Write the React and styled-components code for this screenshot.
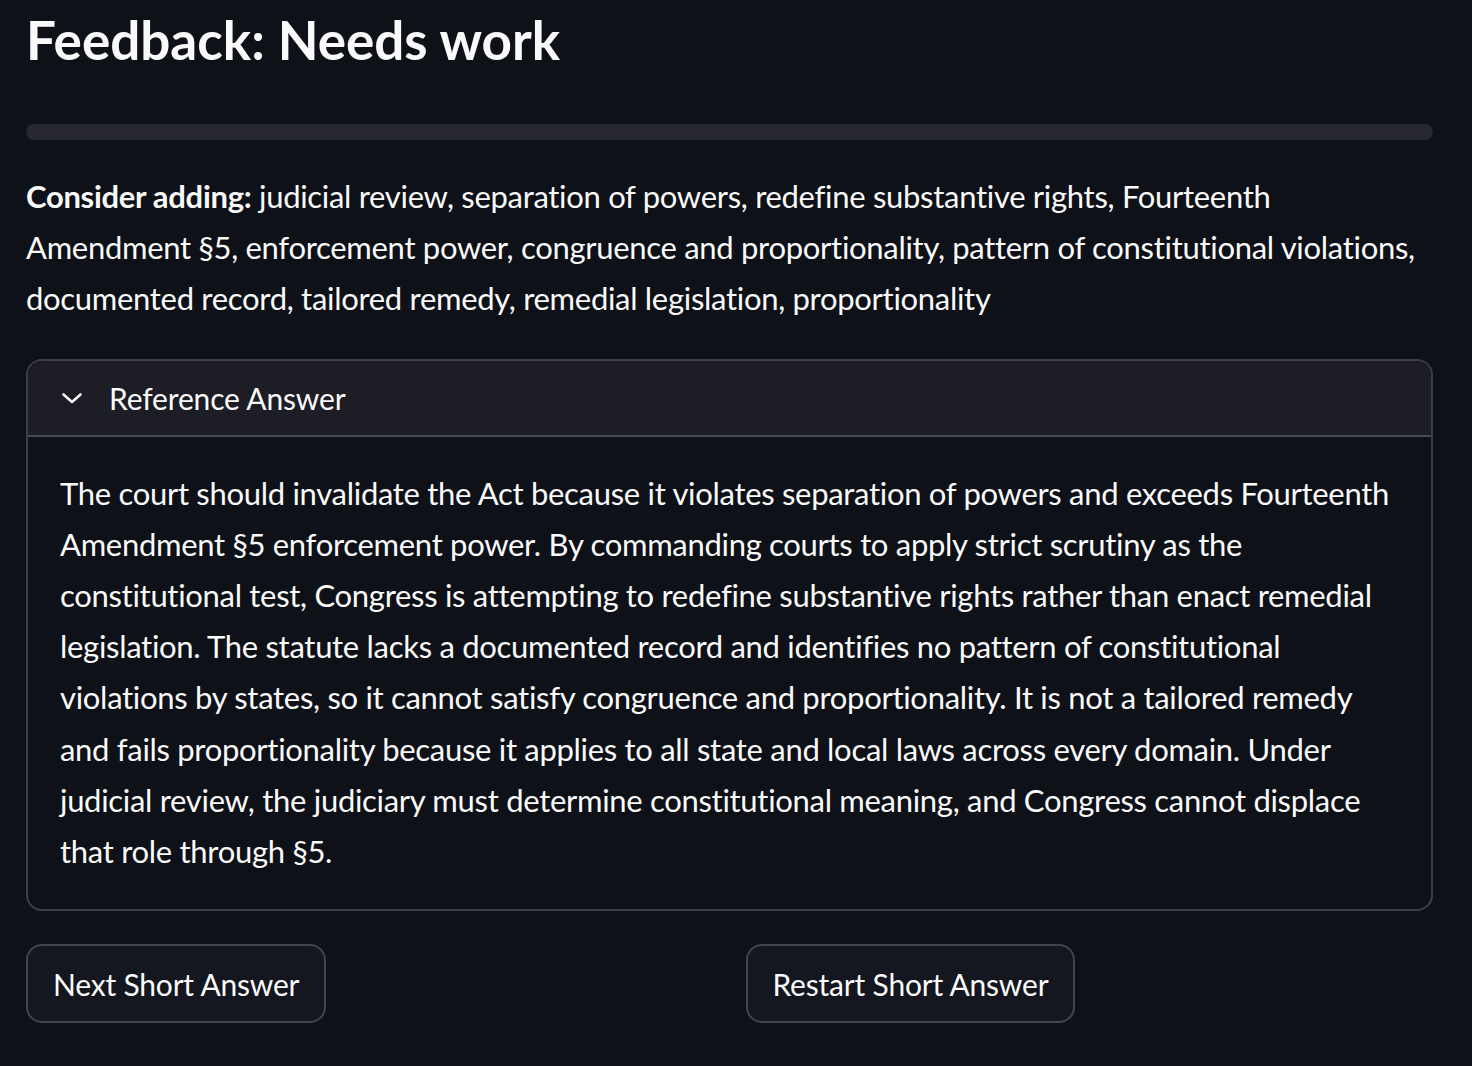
import styled, { createGlobalStyle } from "styled-components";

const GlobalStyle = createGlobalStyle`
  html, body {
    margin: 0;
    padding: 0;
    background: #0e1117;
  }
  body {
    font-family: Lato, "Noto Sans", sans-serif;
    color: #fafafa;
    letter-spacing: -0.3px;
  }
  * {
    box-sizing: border-box;
  }
`;

const Page = styled.div`
  width: 1472px;
  min-height: 1066px;
  padding: 6px 39px 0 26px;
  display: flex;
  flex-direction: column;
`;

const Title = styled.h2`
  margin: 0;
  font-size: 53px;
  font-weight: 700;
  line-height: 67px;
  letter-spacing: 0;
`;

const Track = styled.div`
  margin-top: 51px;
  height: 16px;
  border-radius: 8px;
  background: #262730;
`;

const Fill = styled.div`
  height: 100%;
  border-radius: 8px;
  background: #ff4b4b;
`;

const Hint = styled.p`
  margin: 31px 0 0;
  font-size: 31px;
  line-height: 51.2px;
  white-space: pre-line;
  b {
    font-weight: 700;
  }
`;

const Expander = styled.details`
  margin-top: 34px;
  border: 2px solid rgba(250, 250, 250, 0.2);
  border-radius: 16px;
  overflow: hidden;
`;

const Summary = styled.summary`
  list-style: none;
  display: flex;
  align-items: center;
  gap: 25px;
  height: 76px;
  padding: 0 32px;
  background: #1c1d25;
  border-bottom: 2px solid rgba(250, 250, 250, 0.2);
  font-size: 30px;
  letter-spacing: -0.15px;
  cursor: pointer;
  &::-webkit-details-marker {
    display: none;
  }
  svg {
    flex: none;
  }
`;

const Body = styled.div`
  padding: 31px 32px 32px;
  font-size: 31px;
  line-height: 51.2px;
  white-space: pre-line;
`;

const Actions = styled.div`
  margin-top: 33px;
  display: grid;
  grid-template-columns: 1fr 1fr;
  column-gap: 32px;
  justify-items: start;
`;

const Button = styled.button`
  height: 79px;
  padding: 0 25px;
  border: 2px solid rgba(250, 250, 250, 0.2);
  border-radius: 16px;
  background: #14171f;
  color: #fafafa;
  font-family: inherit;
  font-size: 30px;
  letter-spacing: -0.2px;
  cursor: pointer;
`;

const Chevron = () => (
  <svg width="24" height="24" viewBox="0 0 24 24" fill="none">
    <path
      d="M3.5 8.5 L12 16 L20.5 8.5"
      stroke="#fafafa"
      strokeWidth="2.6"
      strokeLinecap="round"
      strokeLinejoin="round"
    />
  </svg>
);

const hintLines = [
  " judicial review, separation of powers, redefine substantive rights, Fourteenth",
  "Amendment §5, enforcement power, congruence and proportionality, pattern of constitutional violations,",
  "documented record, tailored remedy, remedial legislation, proportionality",
];

const answerLines = [
  "The court should invalidate the Act because it violates separation of powers and exceeds Fourteenth",
  "Amendment §5 enforcement power. By commanding courts to apply strict scrutiny as the",
  "constitutional test, Congress is attempting to redefine substantive rights rather than enact remedial",
  "legislation. The statute lacks a documented record and identifies no pattern of constitutional",
  "violations by states, so it cannot satisfy congruence and proportionality. It is not a tailored remedy",
  "and fails proportionality because it applies to all state and local laws across every domain. Under",
  "judicial review, the judiciary must determine constitutional meaning, and Congress cannot displace",
  "that role through §5.",
];

export default function App() {
  const score = 0;
  return (
    <>
      <GlobalStyle />
      <Page>
        <Title>Feedback: Needs work</Title>
        <Track>
          <Fill style={{ width: `${score}%` }} />
        </Track>
        <Hint>
          <b>Consider adding:</b>
          {hintLines.join("\n")}
        </Hint>
        <Expander open>
          <Summary>
            <Chevron />
            Reference Answer
          </Summary>
          <Body>{answerLines.join("\n")}</Body>
        </Expander>
        <Actions>
          <Button>Next Short Answer</Button>
          <Button>Restart Short Answer</Button>
        </Actions>
      </Page>
    </>
  );
}
